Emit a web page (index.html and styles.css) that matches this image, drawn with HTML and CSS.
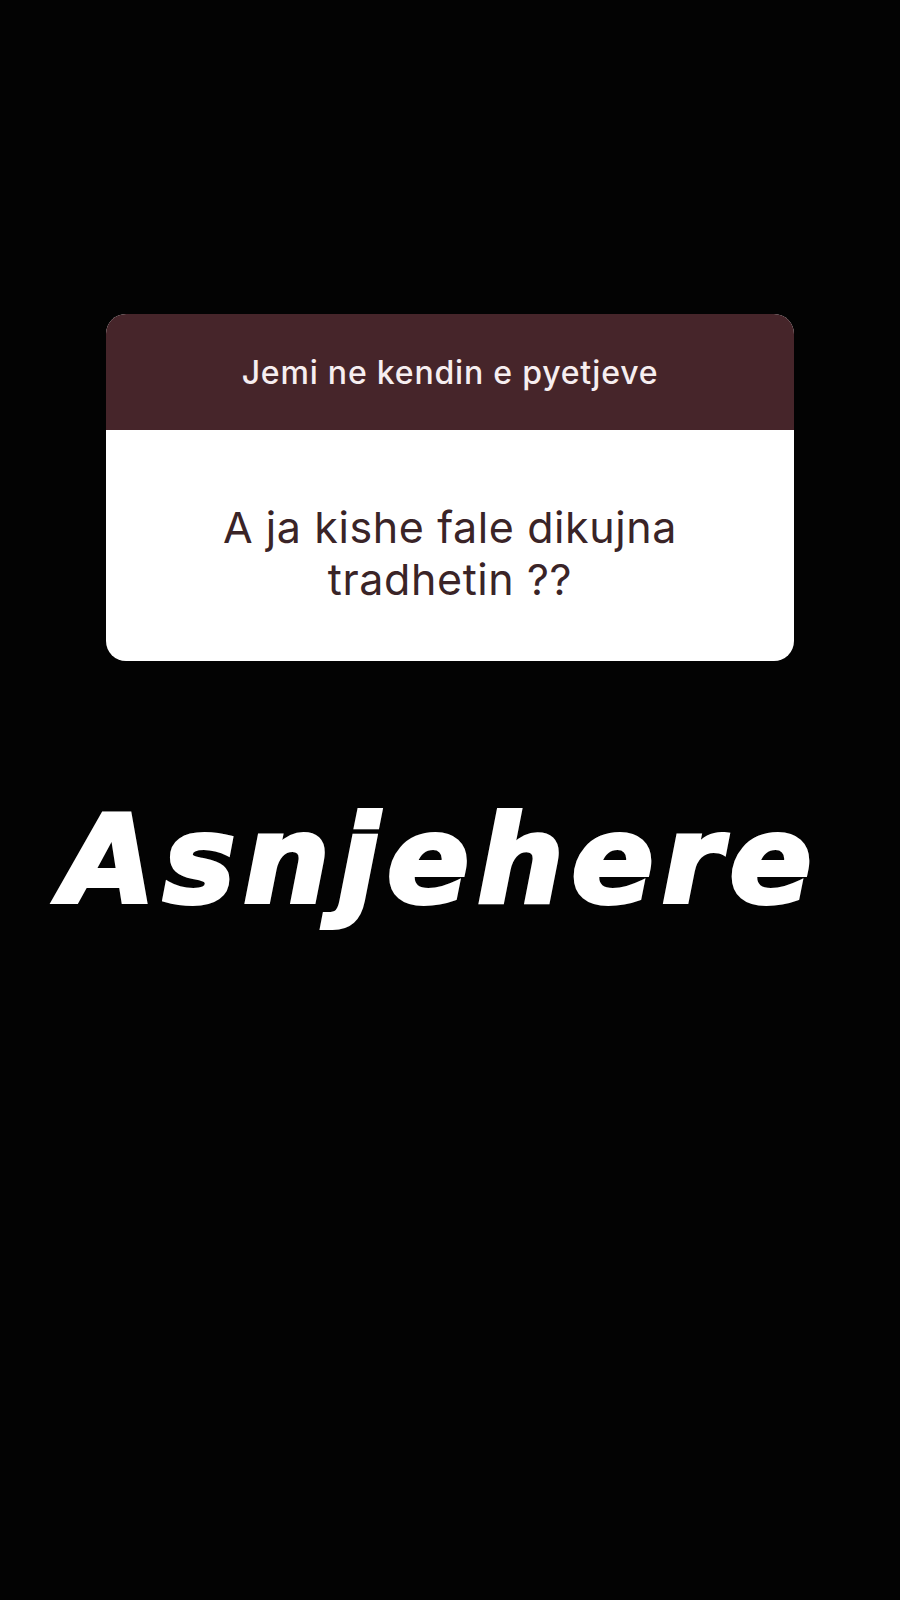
FILE: index.html
```html
<!DOCTYPE html>
<html lang="sq">
<head>
    <meta charset="UTF-8">
    <meta name="viewport" content="width=device-width, initial-scale=1.0">
    <title>Story</title>
    <link rel="stylesheet" href="styles.css">
</head>
<body>
    <div class="story">
        <!-- Question sticker -->
        <div class="question-card">
            <div class="question-head">Jemi ne kendin e pyetjeve</div>
            <div class="question-body">A ja kishe fale dikujna<br>tradhetin ??</div>
        </div>

        <h1 class="answer">Asnjehere</h1>
    </div>
</body>
</html>
```

FILE: styles.css
```css
body {
    margin: 0;
    background-color: #030303;
    font-family: Inter, "Liberation Sans", Arial, sans-serif;
}

.story {
    min-height: 1600px;
    padding-top: 314px;
    box-sizing: border-box;
}

/* Question sticker */
.question-card {
    width: 688px;
    margin-left: 106px;
    border-radius: 20px;
    overflow: hidden;
    background-color: #fff;
}

.question-head {
    height: 116px;
    display: flex;
    align-items: center;
    justify-content: center;
    background-color: #46252a;
    color: #f6eef0;
    font-size: 32px;
    font-weight: 500;
    letter-spacing: 0.8px;
}

.question-body {
    height: 231px;
    padding-top: 14px;
    box-sizing: border-box;
    display: flex;
    align-items: center;
    justify-content: center;
    text-align: center;
    color: #3a2427;
    font-size: 43px;
    line-height: 52px;
    letter-spacing: 0.6px;
}

/* Answer text */
.answer {
    margin: 124px 0 0 61px;
    color: #fff;
    font-family: "DejaVu Sans", sans-serif;
    font-weight: bold;
    font-style: italic;
    font-size: 122px;
    line-height: 150px;
    letter-spacing: 7.5px;
    -webkit-text-stroke: 4px #fff;
}
```
